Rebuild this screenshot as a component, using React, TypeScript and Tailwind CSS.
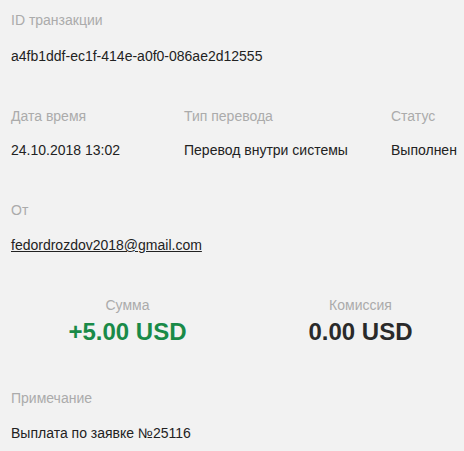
const Label = ({ children }: { children: React.ReactNode }) => (
  <div className="text-[14px] leading-5 text-[#ababab]">{children}</div>
);

const Value = ({ children, className = "" }: { children: React.ReactNode; className?: string }) => (
  <div className={`text-[14px] leading-5 text-[#222] ${className}`}>{children}</div>
);

const App = () => (
  <div className="w-[464px] h-[451px] overflow-hidden bg-[#f2f2f2] pl-[11px] pt-[10px] font-['Liberation_Sans',Arial,sans-serif]">
    {/* ID */}
    <div>
      <Label>ID транзакции</Label>
      <Value className="mt-4">a4fb1ddf-ec1f-414e-a0f0-086ae2d12555</Value>
    </div>

    {/* Дата / тип / статус */}
    <div className="mt-10 flex whitespace-nowrap">
      <div className="w-[173px] shrink-0">
        <Label>Дата время</Label>
        <Value className="mt-[14px]">24.10.2018 13:02</Value>
      </div>
      <div className="w-[207px] shrink-0">
        <Label>Тип перевода</Label>
        <Value className="mt-[14px]">Перевод внутри системы</Value>
      </div>
      <div className="shrink-0">
        <Label>Статус</Label>
        <Value className="mt-[14px]">Выполнен</Value>
      </div>
    </div>

    {/* От */}
    <div className="mt-10">
      <Label>От</Label>
      <Value className="mt-[15px] underline">fedordrozdov2018@gmail.com</Value>
    </div>

    {/* Сумма / комиссия */}
    <div className="mt-10 flex">
      <div className="w-[233px] shrink-0 text-center">
        <Label>Сумма</Label>
        <div className="mt-[2px] text-[24px] leading-[30px] font-bold text-[#198a48]">+5.00 USD</div>
      </div>
      <div className="w-[233px] shrink-0 text-center">
        <Label>Комиссия</Label>
        <div className="mt-[2px] text-[24px] leading-[30px] font-bold text-[#2a2a2a]">0.00 USD</div>
      </div>
    </div>

    {/* Примечание */}
    <div className="mt-[41px]">
      <Label>Примечание</Label>
      <Value className="mt-[15px]">Выплата по заявке №25116</Value>
    </div>
  </div>
);

export default App;
